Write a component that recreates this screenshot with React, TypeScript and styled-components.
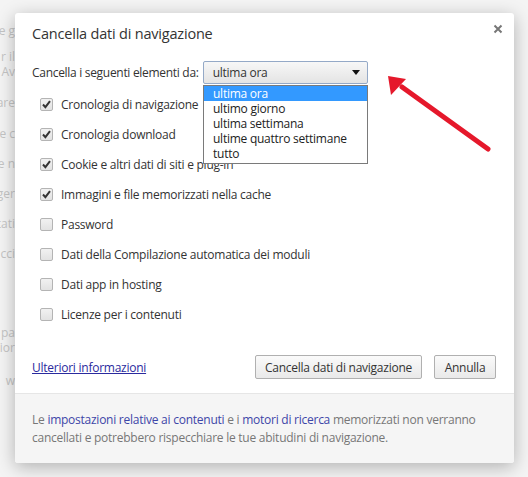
import styled, { createGlobalStyle } from "styled-components";

const GlobalStyle = createGlobalStyle`
  html, body {
    margin: 0;
    padding: 0;
    background: #f4f4f4;
    font-family: "Open Sans", "Noto Sans", sans-serif;
  }
`;

const Page = styled.div`
  position: relative;
  width: 528px;
  height: 477px;
  overflow: hidden;
  background: #f4f4f4;
`;

const SideColumn = styled.div`
  width: 15px;
  overflow: hidden;
  display: flex;
  flex-direction: column;
  align-items: flex-end;
  padding-top: 23px;
`;

const SideText = styled.div<{ $gap: number }>`
  margin-top: ${(p) => p.$gap}px;
  line-height: 15px;
  font-size: 12px;
  color: #c4c4c4;
  white-space: nowrap;
  text-align: right;
`;

const Dialog = styled.div`
  position: absolute;
  left: 15px;
  top: 13px;
  width: 499px;
  height: 450px;
  background: #fff;
  border-radius: 3px;
  box-shadow: 0 4px 18px rgba(0, 0, 0, 0.28);
  display: flex;
  flex-direction: column;
  color: #333;
`;

const Content = styled.div`
  position: relative;
  padding: 11px 18px 0 17px;
  flex: 1;
`;

const Title = styled.h1`
  margin: 0;
  font-size: 14.5px;
  font-weight: 400;
  line-height: 20px;
  color: #333;
  letter-spacing: -0.2px;
`;

const CloseButton = styled.button`
  position: absolute;
  top: 9px;
  right: 9px;
  width: 14px;
  height: 14px;
  padding: 0;
  border: 0;
  background: transparent;
  display: flex;
  align-items: center;
  justify-content: center;
`;

const SelectRow = styled.div`
  margin-top: 17px;
  display: flex;
  align-items: center;
  gap: 4px;
  height: 23px;
`;

const Label = styled.span`
  font-size: 12px;
  letter-spacing: -0.3px;
  color: #333;
`;

const Select = styled.div`
  box-sizing: border-box;
  width: 165px;
  height: 23px;
  border: 1px solid #94a9c7;
  border-radius: 2px;
  background: linear-gradient(#f7f7f7, #e4e4e4);
  display: flex;
  align-items: center;
  justify-content: space-between;
  padding: 0 7px 0 9px;
  font-size: 12px;
  letter-spacing: -0.25px;
  color: #333;
`;

const Arrow = styled.span`
  width: 0;
  height: 0;
  border-left: 4.5px solid transparent;
  border-right: 4.5px solid transparent;
  border-top: 5px solid #111;
`;

const OptionList = styled.ul`
  position: absolute;
  left: 188px;
  top: 72px;
  box-sizing: border-box;
  width: 165px;
  margin: 0;
  padding: 0 0 2px;
  list-style: none;
  background: #fff;
  border: 1px solid #7a7a7a;
  z-index: 2;
`;

const Option = styled.li<{ $active?: boolean }>`
  height: 15px;
  line-height: 15px;
  padding-left: 9px;
  font-size: 12px;
  letter-spacing: -0.25px;
  background: ${(p) => (p.$active ? "#3399ff" : "transparent")};
  color: ${(p) => (p.$active ? "#fff" : "#222")};
`;

const CheckList = styled.div`
  margin-top: 5px;
  display: flex;
  flex-direction: column;
`;

const CheckRow = styled.label`
  height: 30px;
  display: flex;
  align-items: center;
  gap: 8px;
  padding-left: 8px;
  font-size: 12px;
  letter-spacing: -0.25px;
  color: #333;
`;

const Box = styled.span`
  box-sizing: border-box;
  width: 13px;
  height: 13px;
  border: 1px solid #b4b4b4;
  border-radius: 2px;
  background: linear-gradient(#f1f1f1, #e2e2e2);
  display: flex;
  align-items: center;
  justify-content: center;
`;

const Actions = styled.div`
  margin-top: 26px;
  display: flex;
  align-items: center;
  height: 24px;
`;

const MoreLink = styled.a`
  font-size: 12px;
  letter-spacing: -0.25px;
  color: #2a2a9e;
  text-decoration: underline;
  margin-right: auto;
`;

const Button = styled.button<{ $width: number }>`
  box-sizing: border-box;
  width: ${(p) => p.$width}px;
  height: 24px;
  margin-left: 12px;
  border: 1px solid #b0b0b0;
  border-radius: 2px;
  background: linear-gradient(#fafafa, #e9e9e9);
  font-family: inherit;
  font-size: 12px;
  letter-spacing: -0.25px;
  color: #333;
  padding: 0;
`;

const Footer = styled.div`
  height: 70px;
  box-sizing: border-box;
  border-top: 1px solid #e6e6e6;
  background: #f5f5f5;
  border-radius: 0 0 3px 3px;
  padding: 17px 18px 0 17px;
  font-size: 12px;
  line-height: 18px;
  letter-spacing: -0.25px;
  color: #777;
`;

const FooterLink = styled.span`
  color: #3d46a8;
`;

const RedArrow = styled.svg`
  position: absolute;
  left: 0;
  top: 0;
  pointer-events: none;
`;

const Check = () => (
  <svg width="11" height="11" viewBox="0 0 11 11">
    <path d="M2 5.5 L4.4 8.2 L9 2.2" fill="none" stroke="#333" strokeWidth="2" />
  </svg>
);

const items: [string, boolean][] = [
  ["Cronologia di navigazione", true],
  ["Cronologia download", true],
  ["Cookie e altri dati di siti e plug-in", true],
  ["Immagini e file memorizzati nella cache", true],
  ["Password", false],
  ["Dati della Compilazione automatica dei moduli", false],
  ["Dati app in hosting", false],
  ["Licenze per i contenuti", false],
];

const side: [string, number][] = [
  ["e g", 0],
  ["r il", 11],
  ["Av", 0],
  ["are", 16],
  ["e c", 16],
  ["e n", 15],
  ["ger", 15],
  ["tati", 15],
  ["cci", 15],
  ["pa", 64],
  ["ior", 0],
  ["w", 18],
];

const options = [
  "ultima ora",
  "ultimo giorno",
  "ultima settimana",
  "ultime quattro settimane",
  "tutto",
];

export default function App() {
  return (
    <Page>
      <GlobalStyle />
      <SideColumn>
        {side.map(([t, g], i) => (
          <SideText key={i} $gap={g}>
            {t}
          </SideText>
        ))}
      </SideColumn>
      <Dialog>
        <Content>
          <Title>Cancella dati di navigazione</Title>
          <CloseButton aria-label="Chiudi">
            <svg width="10" height="10" viewBox="0 0 10 10">
              <path d="M1.5 1.5 L8.5 8.5 M8.5 1.5 L1.5 8.5" stroke="#777" strokeWidth="2" />
            </svg>
          </CloseButton>
          <SelectRow>
            <Label>Cancella i seguenti elementi da:</Label>
            <Select>
              <span>ultima ora</span>
              <Arrow />
            </Select>
          </SelectRow>
          <OptionList>
            {options.map((o, i) => (
              <Option key={o} $active={i === 0}>
                {o}
              </Option>
            ))}
          </OptionList>
          <CheckList>
            {items.map(([label, checked]) => (
              <CheckRow key={label}>
                <Box>{checked && <Check />}</Box>
                {label}
              </CheckRow>
            ))}
          </CheckList>
          <Actions>
            <MoreLink href="#">Ulteriori informazioni</MoreLink>
            <Button $width={167}>Cancella dati di navigazione</Button>
            <Button $width={62}>Annulla</Button>
          </Actions>
        </Content>
        <Footer>
          Le <FooterLink>impostazioni relative ai contenuti</FooterLink> e i{" "}
          <FooterLink>motori di ricerca</FooterLink> memorizzati non verranno
          <br />
          cancellati e potrebbero rispecchiare le tue abitudini di navigazione.
        </Footer>
      </Dialog>
      <RedArrow width="528" height="477" viewBox="0 0 528 477">
        <line x1="402" y1="87" x2="488" y2="149" stroke="#e5182b" strokeWidth="5" strokeLinecap="round" />
        <polygon points="388,76 406,79 391,95" fill="#e5182b" />
      </RedArrow>
    </Page>
  );
}
